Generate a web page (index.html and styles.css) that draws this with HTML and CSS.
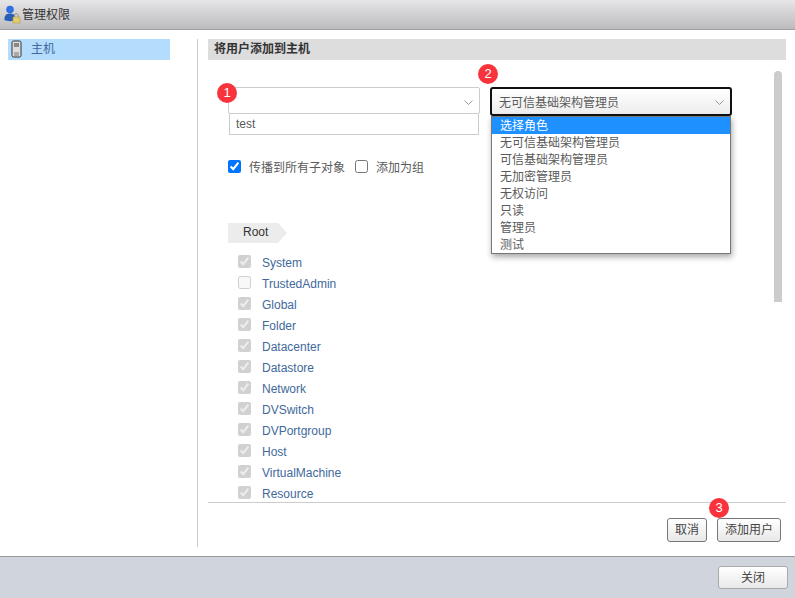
FILE: index.html
```html
<!DOCTYPE html>
<html lang="zh">
<head>
<meta charset="utf-8">
<title>管理权限</title>
<link rel="stylesheet" href="styles.css">
</head>
<body>
<div class="app">
  <header class="titlebar">
    <svg class="title-icon" width="18" height="20" viewBox="0 0 18 20">
      <circle cx="7" cy="5.500" r="3.800" fill="#2f6fe0"/>
      <path d="M1.500 16c-.5-4.500 2-6.500 5.500-6.500s6 2 5.500 6.500c-3 1.500-8 1.500-11 0z" fill="#2a5db8"/>
      <path d="M11.500 13v-1.500a1.800 1.800 0 0 1 3.600 0V13" fill="none" stroke="#8f8f80"/>
      <rect x="10" y="13" width="7" height="6" fill="#e3cc6e" stroke="#ab9540" stroke-width=".5"/>
    </svg>
    <span class="title-text">管理权限</span>
  </header>
  <main class="main">
    <nav class="sidebar">
      <div class="nav-item">
        <svg width="12" height="18" viewBox="0 0 12 18">
          <rect x="1" y="1" width="9" height="16" rx="1.500" fill="#ddd" stroke="#333"/>
          <path d="M3 4h5M3 6h5" stroke="#333"/>
          <path d="M3 13h5M3 15h5" stroke="#777"/>
        </svg>
        <span>主机</span>
      </div>
    </nav>
    <section class="panel">
      <h2 class="panel-title">将用户添加到主机</h2>
      <div class="scroller">
        <div class="form-row">
          <div class="user-col">
            <div class="select plain"><svg class="chev" width="9" height="6" viewBox="0 0 9 6"><path d="M.5.500 4.500 4.500 8.500.500" fill="none" stroke="#999"/></svg></div>
            <div class="user-input">test</div>
          </div>
          <div class="select role">
            <span>无可信基础架构管理员</span>
            <svg class="chev" width="9" height="6" viewBox="0 0 9 6"><path d="M.5.500 4.500 4.500 8.500.500" fill="none" stroke="#999"/></svg>
          </div>
        </div>
        <div class="options">
          <label class="opt"><input type="checkbox" checked>传播到所有子对象</label>
          <label class="opt"><input type="checkbox">添加为组</label>
        </div>
        <div class="crumb">Root</div>
        <ul class="tree">
          <li><input type="checkbox" checked disabled><span>System</span></li>
          <li><input type="checkbox" disabled><span>TrustedAdmin</span></li>
          <li><input type="checkbox" checked disabled><span>Global</span></li>
          <li><input type="checkbox" checked disabled><span>Folder</span></li>
          <li><input type="checkbox" checked disabled><span>Datacenter</span></li>
          <li><input type="checkbox" checked disabled><span>Datastore</span></li>
          <li><input type="checkbox" checked disabled><span>Network</span></li>
          <li><input type="checkbox" checked disabled><span>DVSwitch</span></li>
          <li><input type="checkbox" checked disabled><span>DVPortgroup</span></li>
          <li><input type="checkbox" checked disabled><span>Host</span></li>
          <li><input type="checkbox" checked disabled><span>VirtualMachine</span></li>
          <li><input type="checkbox" checked disabled><span>Resource</span></li>
        </ul>
        <div class="scrollbar"></div>
        <ul class="menu">
          <li class="active">选择角色</li>
          <li>无可信基础架构管理员</li>
          <li>可信基础架构管理员</li>
          <li>无加密管理员</li>
          <li>无权访问</li>
          <li>只读</li>
          <li>管理员</li>
          <li>测试</li>
        </ul>
        <b class="badge b1">1</b>
        <b class="badge b2">2</b>
      </div>
      <div class="actions">
        <button class="btn">取消</button>
        <button class="btn">添加用户</button>
        <b class="badge b3">3</b>
      </div>
    </section>
  </main>
  <footer class="footer"><button class="btn close">关闭</button></footer>
</div>
</body>
</html>
```
FILE: styles.css
```css
* { box-sizing: border-box; }
html, body { margin: 0; padding: 0; }
body {
  width: 795px;
  height: 598px;
  overflow: hidden;
  font-family: "Liberation Sans", "Noto Sans CJK SC", sans-serif;
  font-size: 12px;
  color: #5a5a5a;
  background: #fff;
}
.app { display: flex; flex-direction: column; height: 598px; }
.titlebar {
  height: 30px;
  flex: none;
  display: flex;
  align-items: center;
  gap: 1px;
  padding: 0 0 2px 3px;
  background: linear-gradient(#e6e6e8, #bcbcbf);
  border-bottom: 1px solid #a0a0a0;
  color: #333;
}
.title-icon { flex: none; }
.main {
  flex: 1;
  min-height: 0;
  display: flex;
  padding: 9px 9px 9px 8px;
}
.sidebar {
  width: 190px;
  flex: none;
  border-right: 1px solid #ccc;
}
.nav-item {
  width: 162px;
  height: 21px;
  display: flex;
  align-items: center;
  gap: 8px;
  padding: 0 0 2px 3px;
  background: #b3dcfd;
  color: #41699c;
}
.nav-item span { margin-top: -2px; }
.panel {
  flex: 1;
  min-width: 0;
  margin-left: 10px;
  display: flex;
  flex-direction: column;
  position: relative;
}
.panel-title {
  margin: 0;
  height: 21px;
  flex: none;
  font-size: 12px;
  line-height: 20px;
  padding-left: 6px;
  font-weight: bold;
  background: #ddd;
  color: #333;
}
.scroller {
  position: relative;
  height: 443px;
  flex: none;
  overflow: hidden;
  border-bottom: 1px solid #ccc;
  padding: 27px 0 0 20px;
}
.form-row { display: flex; gap: 10px; }
.user-col { width: 252px; }
.select {
  position: relative;
  height: 29px;
  border: 1px solid #ccc;
  border-radius: 2px;
  background: #fff;
  display: flex;
  align-items: center;
}
.select.plain { height: 27px; }
.chev { position: absolute; right: 6px; top: 12px; }
.role {
  width: 242px;
  border: 2px solid #111;
  border-radius: 3px;
  background: linear-gradient(#fff, #ededed);
  padding-left: 7px;
}
.role span { margin-top: -1px; }
.role .chev { right: 6px; top: 11px; }
.user-input {
  margin: -1px 1px 0;
  height: 22px;
  border: 1px solid #ccc;
  padding-left: 6px;
  line-height: 20px;
}
.options {
  display: flex;
  gap: 10px;
  margin-top: 24px;
  height: 14px;
}
.opt { display: flex; align-items: center; }
.opt input { margin: 1px 8px 0 0; width: 13px; height: 13px; }
.crumb {
  position: relative;
  width: 50px;
  height: 20px;
  margin-top: 50px;
  background: #ececec;
  line-height: 19px;
  padding-left: 15px;
  color: #333;
}
.crumb::after {
  content: "";
  position: absolute;
  left: 50px;
  top: 0;
  border-left: 9px solid #ececec;
  border-top: 10px solid transparent;
  border-bottom: 10px solid transparent;
}
.tree { list-style: none; margin: 9px 0 0; padding: 0 0 0 10px; }
.tree li {
  height: 21px;
  display: flex;
  align-items: center;
  color: #41699c;
}
.tree input { margin: 0 11px 0 0; width: 13px; height: 13px; flex: none; position: relative; top: -1px; }
.scrollbar {
  position: absolute;
  left: 566px;
  top: 11px;
  width: 8px;
  height: 231px;
  border-radius: 4px 4px 0 0;
  background: #ccc;
}
.menu {
  position: absolute;
  left: 283px;
  top: 56px;
  width: 240px;
  margin: 0;
  padding: 0;
  list-style: none;
  background: #fff;
  border: 1px solid #777;
  box-shadow: 1px 3px 6px rgba(0,0,0,.35);
}
.menu li { height: 17px; line-height: 18px; padding-left: 8px; }
.menu .active { background: #1e90ff; color: #fff; }
.badge {
  position: absolute;
  width: 20px;
  height: 20px;
  border-radius: 50%;
  background: #f8333c;
  color: #fff;
  font-weight: normal;
  font-size: 13px;
  line-height: 20px;
  text-align: center;
}
.b1 { left: 9px; top: 23px; }
.b2 { left: 270px; top: 4px; }
.b3 { left: 501px; top: -5px; }
.actions {
  position: relative;
  flex: 1;
  display: flex;
  justify-content: flex-end;
  gap: 10px;
  padding: 15px 5px 0 0;
}
.btn {
  font: inherit;
  color: #444;
  height: 24px;
  padding: 0 7px 3px;
  border: 1px solid #777;
  border-radius: 3px;
  background: linear-gradient(#fff, #e8e8e8);
}
.footer {
  flex: none;
  height: 42px;
  display: flex;
  justify-content: flex-end;
  align-items: flex-start;
  padding: 9px 7px 0 0;
  background: #d0d5dd;
  border-top: 1px solid #999;
}
.close { width: 70px; height: 23px; border-color: #aaa; }
```
